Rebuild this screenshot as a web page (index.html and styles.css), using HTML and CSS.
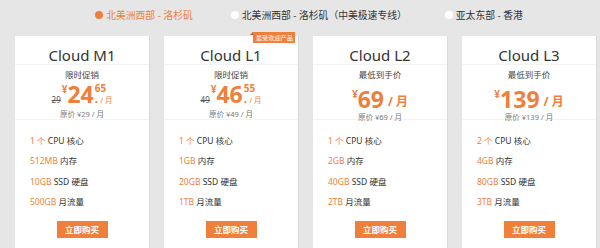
FILE: index.html
```html
<!DOCTYPE html>
<html lang="zh-CN">
<head>
  <meta charset="UTF-8" />
  <meta name="viewport" content="width=device-width, initial-scale=1.0" />
  <title>Cloud 价格</title>
  <link rel="stylesheet" href="styles.css">
</head>
<body>
  <div class="regions">
    <a href="#" class="region active"><span class="dot"></span>北美洲西部 - 洛杉矶</a>
    <a href="#" class="region"><span class="dot"></span>北美洲西部 - 洛杉矶（中美极速专线）</a>
    <a href="#" class="region"><span class="dot"></span>亚太东部 - 香港</a>
  </div>
  <div class="plans">
    <div class="plan">
      <h3>Cloud M1</h3>
      <div class="pricing">
        <p class="label">限时促销</p>
        <div class="price">
          <del>29</del><sup>¥</sup><b>24</b>
          <span class="dec"><i>65</i><em><strong>.</strong>/ 月</em></span>
        </div>
        <p class="orig">原价 ¥29 / 月</p>
      </div>
      <ul class="specs">
        <li><span>1 个</span> CPU 核心</li>
        <li><span>512MB</span> 内存</li>
        <li><span>10GB</span> SSD 硬盘</li>
        <li><span>500GB</span> 月流量</li>
      </ul>
      <a href="#" class="btn-buy">立即购买</a>
    </div>
    <div class="plan">
      <span class="badge">最受欢迎产品</span>
      <h3>Cloud L1</h3>
      <div class="pricing">
        <p class="label">限时促销</p>
        <div class="price">
          <del>49</del><sup>¥</sup><b>46</b>
          <span class="dec"><i>55</i><em><strong>.</strong>/ 月</em></span>
        </div>
        <p class="orig">原价 ¥49 / 月</p>
      </div>
      <ul class="specs">
        <li><span>1 个</span> CPU 核心</li>
        <li><span>1GB</span> 内存</li>
        <li><span>20GB</span> SSD 硬盘</li>
        <li><span>1TB</span> 月流量</li>
      </ul>
      <a href="#" class="btn-buy">立即购买</a>
    </div>
    <div class="plan">
      <h3>Cloud L2</h3>
      <div class="pricing">
        <p class="label">最低到手价</p>
        <div class="price">
          <sup>¥</sup><b>69</b><span class="unit">/ 月</span>
        </div>
        <p class="orig">原价 ¥69 / 月</p>
      </div>
      <ul class="specs">
        <li><span>1 个</span> CPU 核心</li>
        <li><span>2GB</span> 内存</li>
        <li><span>40GB</span> SSD 硬盘</li>
        <li><span>2TB</span> 月流量</li>
      </ul>
      <a href="#" class="btn-buy">立即购买</a>
    </div>
    <div class="plan">
      <h3>Cloud L3</h3>
      <div class="pricing">
        <p class="label">最低到手价</p>
        <div class="price">
          <sup>¥</sup><b>139</b><span class="unit">/ 月</span>
        </div>
        <p class="orig">原价 ¥139 / 月</p>
      </div>
      <ul class="specs">
        <li><span>2 个</span> CPU 核心</li>
        <li><span>4GB</span> 内存</li>
        <li><span>80GB</span> SSD 硬盘</li>
        <li><span>3TB</span> 月流量</li>
      </ul>
      <a href="#" class="btn-buy">立即购买</a>
    </div>
  </div>
</body>
</html>
```

FILE: styles.css
```css
:root {
  --orange: #ef7f3b;
  --bg: #e6e6e6;
  --text: #333333;
  --muted: #777777;
  --line: #f3f3f3;
}
* { box-sizing: border-box; }
body {
  margin: 0;
  background: var(--bg);
  font-family: "Noto Sans", "Noto Sans CJK SC", sans-serif;
  color: var(--text);
}

/* region tabs */
.regions {
  display: flex;
  justify-content: center;
  gap: 38px;
  height: 30px;
  align-items: center;
  padding-left: 18px;
}
.region {
  display: flex;
  align-items: center;
  gap: 3px;
  font-size: 9.8px;
  color: var(--text);
  text-decoration: none;
}
.region.active { color: var(--orange); }
.region .dot {
  width: 8px;
  height: 8px;
  border-radius: 50%;
  background: white;
}
.region.active .dot { background: var(--orange); }

/* plan cards */
.plans {
  display: grid;
  grid-template-columns: repeat(4, 1fr);
  gap: 15px;
  padding: 6px 4px 0 15px;
}
.plan {
  position: relative;
  background: white;
  box-shadow: 1px 0 0 #d9d9d9;
  text-align: center;
  padding-bottom: 20px;
}
.plan h3 {
  margin: 0;
  padding: 9px 0 6px;
  height: 29px;
  font-size: 15px;
  font-weight: 400;
  line-height: 20px;
  border-bottom: 1px solid var(--line);
}
.badge {
  position: absolute;
  top: -4px;
  right: 3px;
  background: var(--orange);
  color: white;
  font-size: 6.2px;
  line-height: 11px;
  padding: 0 2px 0 3px;
}
.badge::before {
  content: "";
  position: absolute;
  left: -3px;
  top: 0;
  border-bottom: 3px solid #b85a22;
  border-left: 3px solid transparent;
}

.pricing {
  height: 55px;
  border-bottom: 1px solid var(--line);
  padding-top: 4px;
}
.pricing .label {
  margin: 0;
  font-size: 8.5px;
  line-height: 12px;
  color: #444;
}
.price {
  display: inline-flex;
  align-items: flex-start;
  color: var(--orange);
  height: 24px;
  margin-top: 1px;
}
.price del {
  font-size: 8px;
  color: #555;
  align-self: flex-end;
  margin-right: 1px;
  line-height: 12px;
}
.price sup {
  font-size: 10px;
  font-weight: 700;
  line-height: 12px;
  margin-top: 1px;
}
.price b {
  font-size: 23px;
  font-weight: 700;
  line-height: 24px;
}
.price .dec {
  display: flex;
  flex-direction: column;
  align-items: flex-start;
  margin-left: 1px;
}
.price .dec i {
  font-style: normal;
  font-weight: 700;
  font-size: 10px;
  line-height: 12px;
}
.price .dec em {
  font-style: normal;
  font-size: 7.5px;
  line-height: 10px;
}
.price .dec strong {
  font-size: 12px;
  line-height: 10px;
  margin-right: 2px;
}
.price .unit {
  font-size: 12px;
  font-weight: 700;
  align-self: flex-end;
  margin-left: 4px;
  line-height: 18px;
}
.pricing .orig {
  margin: 1px 0 0;
  font-size: 7.5px;
  line-height: 10px;
  color: var(--muted);
}

.specs {
  list-style: none;
  margin: 0;
  padding: 15px 0 0 15px;
  text-align: left;
}
.specs li {
  font-size: 8.5px;
  line-height: 12px;
  margin-bottom: 8.3px;
}
.specs span { color: var(--orange); }

.btn-buy {
  display: inline-block;
  width: 51px;
  height: 17px;
  line-height: 17px;
  background: var(--orange);
  color: white;
  font-size: 8.5px;
  font-weight: 700;
  text-decoration: none;
}
```
